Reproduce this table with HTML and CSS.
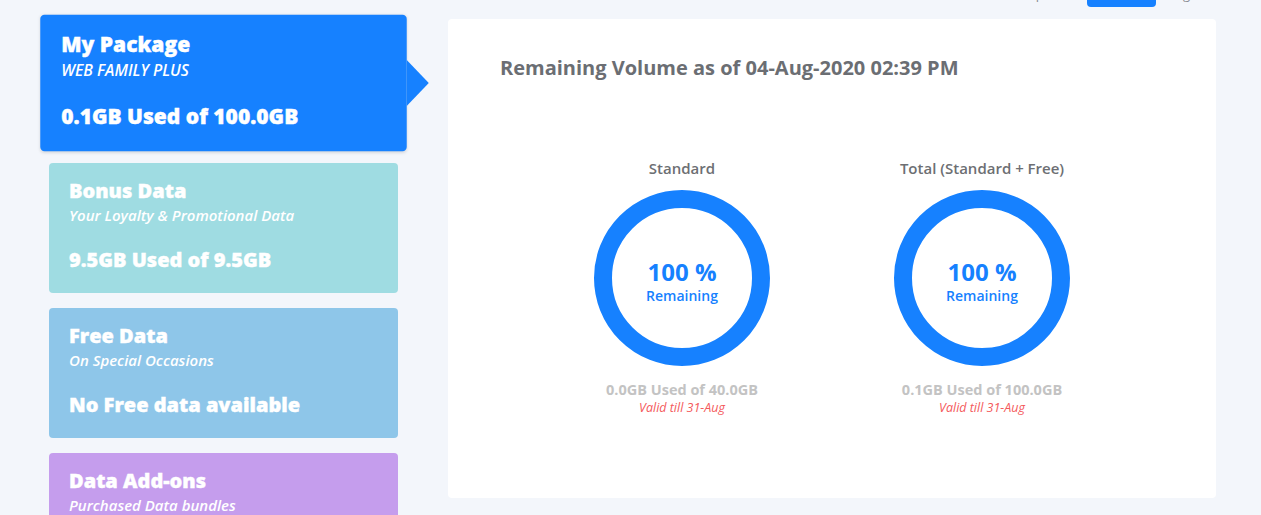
FILE: index.html
```html
<!DOCTYPE html>
<html lang="en">
<head>
<meta charset="utf-8">
<title>My Package</title>
<link rel="stylesheet" href="styles.css">
</head>
<body>
<header class="topbar">
  <span class="top-link">Help</span>
  <span class="top-btn">Login</span>
  <span class="top-link">Eng</span>
</header>
<div class="page">
  <aside class="sidebar">
    <div class="card card-active">
      <div class="card-title">My Package</div>
      <div class="card-sub">WEB FAMILY PLUS</div>
      <div class="card-usage">0.1GB Used of 100.0GB</div>
    </div>
    <div class="card card-bonus">
      <div class="card-title">Bonus Data</div>
      <div class="card-sub">Your Loyalty &amp; Promotional Data</div>
      <div class="card-usage">9.5GB Used of 9.5GB</div>
    </div>
    <div class="card card-free">
      <div class="card-title">Free Data</div>
      <div class="card-sub">On Special Occasions</div>
      <div class="card-usage">No Free data available</div>
    </div>
    <div class="card card-addon">
      <div class="card-title">Data Add-ons</div>
      <div class="card-sub">Purchased Data bundles</div>
      <div class="card-usage">&nbsp;</div>
    </div>
  </aside>
  <main class="panel">
    <h1 class="panel-title">Remaining Volume as of 04-Aug-2020 02:39 PM</h1>
    <div class="meters">
      <div class="meter">
        <div class="meter-label">Standard</div>
        <div class="ring">
          <div class="ring-pct">100 %</div>
          <div class="ring-text">Remaining</div>
        </div>
        <div class="meter-used">0.0GB Used of 40.0GB</div>
        <div class="meter-valid">Valid till 31-Aug</div>
      </div>
      <div class="meter">
        <div class="meter-label">Total (Standard + Free)</div>
        <div class="ring">
          <div class="ring-pct">100 %</div>
          <div class="ring-text">Remaining</div>
        </div>
        <div class="meter-used">0.1GB Used of 100.0GB</div>
        <div class="meter-valid">Valid till 31-Aug</div>
      </div>
    </div>
  </main>
</div>
</body>
</html>
```
FILE: styles.css
```css
* { box-sizing: border-box; }
html, body { margin: 0; padding: 0; }
body {
  background: #f3f6fb;
  font-family: "Open Sans", "Noto Sans", sans-serif;
  overflow: hidden;
  height: 515px;
}

.topbar {
  height: 37px;
  margin-top: -30px;
  display: flex;
  align-items: flex-end;
  justify-content: flex-end;
  padding-right: 71px;
}
.top-link {
  font-size: 13px;
  line-height: 16px;
  color: #8a8d93;
  margin-bottom: 5px;
}
.top-btn {
  display: block;
  width: 69px;
  height: 30px;
  background: #1681ff;
  color: #fff;
  border-radius: 0 0 4px 4px;
  margin: 0 12px 0 43px;
  font-size: 13px;
  line-height: 30px;
  text-align: center;
}

.page {
  display: flex;
  align-items: flex-start;
  padding: 11px 0 0 49px;
}

.sidebar {
  width: 349px;
  display: flex;
  flex-direction: column;
  gap: 15px;
}

.card {
  position: relative;
  height: 130px;
  border-radius: 4px;
  padding: 16px 20px 0 20px;
  color: #fff;
}
.card-title {
  font-size: 20px;
  line-height: 24px;
  font-weight: 800;
  -webkit-text-stroke: 0.4px #fff;
}
.card-sub {
  font-size: 15px;
  line-height: 20px;
  font-style: italic;
  font-weight: 600;
  margin-top: 2px;
}
.card-usage {
  font-size: 20px;
  line-height: 24px;
  font-weight: 800;
  margin-top: 23px;
  -webkit-text-stroke: 0.4px #fff;
}

.card-active {
  background: #1681ff;
  transform: scale(1.05);
  box-shadow: 0 1px 3px rgba(0, 0, 0, 0.12);
}
.card-active::after {
  content: "";
  position: absolute;
  top: 43px;
  right: -21px;
  border-top: 22px solid transparent;
  border-bottom: 22px solid transparent;
  border-left: 21px solid #1681ff;
}
.card-bonus { background: #9fdce2; }
.card-free { background: #8ec6e9; }
.card-addon { background: #c59ded; }

.panel {
  margin: 1px 0 0 50px;
  width: 768px;
  height: 479px;
  background: #fff;
  border-radius: 4px;
  padding: 37px 52px 0 52px;
}
.panel-title {
  margin: 0;
  font-size: 20px;
  line-height: 24px;
  font-weight: 700;
  color: #6b6e73;
}

.meters {
  display: flex;
  justify-content: center;
  margin-top: 78px;
}
.meter {
  width: 300px;
  display: flex;
  flex-direction: column;
  align-items: center;
  text-align: center;
}
.meter-label {
  font-size: 15px;
  line-height: 20px;
  font-weight: 600;
  color: #6d6f73;
}
.ring {
  margin-top: 12px;
  width: 176px;
  height: 176px;
  border: 18px solid #1681ff;
  border-radius: 50%;
  display: flex;
  flex-direction: column;
  align-items: center;
  justify-content: center;
  padding-top: 6px;
  color: #1681ff;
}
.ring-pct {
  font-size: 24px;
  line-height: 29px;
  font-weight: 700;
}
.ring-text {
  font-size: 14px;
  line-height: 19px;
  font-weight: 600;
}
.meter-used {
  margin-top: 14px;
  font-size: 14.5px;
  line-height: 20px;
  font-weight: 700;
  color: #c3c3c3;
}
.meter-valid {
  font-size: 12.5px;
  line-height: 16px;
  font-style: italic;
  color: #f4595b;
}
```
